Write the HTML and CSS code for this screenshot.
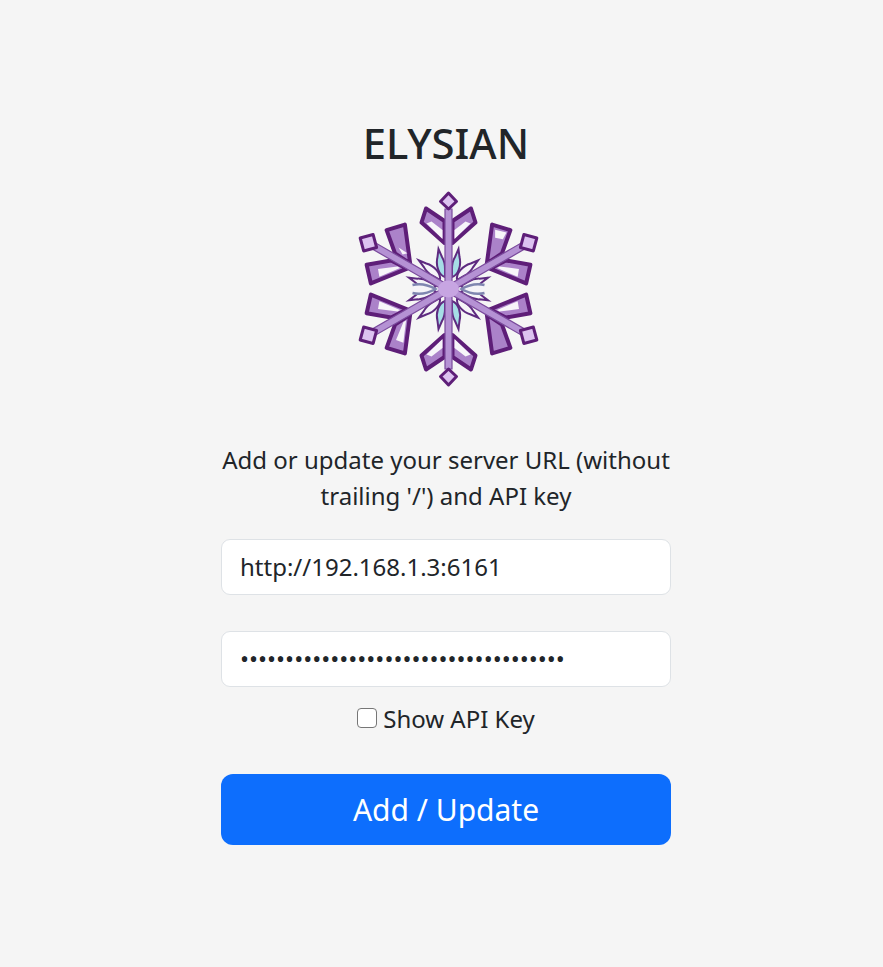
FILE: index.html
```html
<!DOCTYPE html>
<html lang="en">
<head>
<meta charset="utf-8">
<title>Elysian</title>
<link rel="stylesheet" href="styles.css">
</head>
<body>
<main class="page">
  <h1 class="title">ELYSIAN</h1>
  <svg class="logo" width="180" height="200" viewBox="-92.5 -100 180 200">
    <defs>
      <path id="leaf" class="leaf" d="M-22.5 -80.5 L-4 -68 L-4 -46 L-27 -66.5 Z"/>
      <path id="leaf-d" class="leaf" d="M-20 -83 L-4 -64 L-3 -46 L-34 -70 Z"/>
      <path id="win" class="win" d="M-22 -65.5 L-17 -67.5 L-6 -59 L-6 -50 Z"/>
      <path id="win-d" class="win" d="M-18 -71 L-6 -55.5 L-6 -52.5 L-24 -66 Z"/>
      <path id="win-base" class="win" d="M-11 -64 L-7 -57 L-10.5 -53.5 Z"/>
      <path id="win-tip" class="win" d="M-28 -70 L-20 -78.5 L-16 -72 L-21 -66 Z"/>
      <path id="drop" d="M-3.5 -12 C-10 -14 -13 -24 -11 -32 L-10 -40 L-6.5 -32 C-4 -28 -3.5 -24 -3.5 -20 Z"/>
      <path id="flare" class="flare" d="M-36 -4 C-28 -6 -20 -4 -13 0 C-20 4 -28 6 -36 4"/>
      <path id="spine" class="spine" d="M-3.5 0 L-3.5 -80 L3.5 -80 L3.5 0 Z"/>
      <path id="diamond" class="diamond" d="M0 -96 L8 -87.5 L0 -80 L-8 -87.5 Z"/>
      <path id="diamond-d" class="diamond" d="M0 -97 L9.5 -87.5 L0 -78 L-9.5 -87.5 Z"/>
    </defs>

    <use href="#leaf"/><use href="#leaf" transform="scale(-1 1)"/>
    <use href="#leaf-d" transform="rotate(60)"/><use href="#leaf-d" transform="rotate(60) scale(-1 1)"/>
    <use href="#leaf-d" transform="rotate(120)"/><use href="#leaf-d" transform="rotate(120) scale(-1 1)"/>
    <use href="#leaf" transform="rotate(180)"/><use href="#leaf" transform="rotate(180) scale(-1 1)"/>
    <use href="#leaf-d" transform="rotate(240)"/><use href="#leaf-d" transform="rotate(240) scale(-1 1)"/>
    <use href="#leaf-d" transform="rotate(300)"/><use href="#leaf-d" transform="rotate(300) scale(-1 1)"/>

    <use href="#win"/><use href="#win" transform="scale(-1 1)"/>
    <use href="#win-tip" transform="rotate(60)"/><use href="#win-d" transform="rotate(60) scale(-1 1)"/>
    <use href="#win-d" transform="rotate(120)"/>
    <use href="#win" transform="rotate(180)"/><use href="#win" transform="rotate(180) scale(-1 1)"/>
    <use href="#win-d" transform="rotate(240)"/><use href="#win-d" transform="rotate(240) scale(-1 1)"/>
    <use href="#win-d" transform="rotate(300)"/><use href="#win-base" transform="rotate(300) scale(-1 1)"/>

    <g class="drop-cyan">
      <use href="#drop"/><use href="#drop" transform="scale(-1 1)"/>
      <use href="#drop" transform="rotate(180)"/><use href="#drop" transform="rotate(180) scale(-1 1)"/>
    </g>
    <g class="drop-pale">
      <use href="#drop" transform="rotate(60)"/><use href="#drop" transform="rotate(60) scale(-1 1)"/>
      <use href="#drop" transform="rotate(120)"/><use href="#drop" transform="rotate(120) scale(-1 1)"/>
      <use href="#drop" transform="rotate(240)"/><use href="#drop" transform="rotate(240) scale(-1 1)"/>
      <use href="#drop" transform="rotate(300)"/><use href="#drop" transform="rotate(300) scale(-1 1)"/>
    </g>
    <use href="#flare"/>
    <use href="#flare" transform="scale(-1 1)"/>

    <use href="#spine"/>
    <use href="#spine" transform="rotate(180)"/>
    <use href="#spine" transform="rotate(60) translate(0 -5)"/>
    <use href="#spine" transform="rotate(120) translate(0 -5)"/>
    <use href="#spine" transform="rotate(240) translate(0 -5)"/>
    <use href="#spine" transform="rotate(300) translate(0 -5)"/>
    <use href="#diamond"/>
    <use href="#diamond" transform="rotate(180)"/>
    <use href="#diamond-d" transform="rotate(60) translate(0 -5)"/>
    <use href="#diamond-d" transform="rotate(120) translate(0 -5)"/>
    <use href="#diamond-d" transform="rotate(240) translate(0 -5)"/>
    <use href="#diamond-d" transform="rotate(300) translate(0 -5)"/>
    <ellipse class="hub" rx="10.5" ry="8.5"/>
  </svg>
  <p class="lead">Add or update your server URL (without trailing '/') and API key</p>
  <form class="form">
    <input class="field url" type="text" value="http://192.168.1.3:6161">
    <input class="field key" type="password" value="abcdefghijklmnopqrstuvwxyz0123456789">
    <label class="show"><input class="check" type="checkbox">Show API Key</label>
    <button class="submit" type="button">Add / Update</button>
  </form>
</main>
</body>
</html>
```
FILE: styles.css
```css
* { box-sizing: border-box; }
html { margin: 0; }
body {
  margin: 0;
  padding-left: 9px;
  background: #f5f5f5;
  color: #212529;
  font-family: "Noto Sans", sans-serif;
  font-size: 24px;
  line-height: 36px;
}
.page {
  width: 450px;
  margin: 0 auto;
  padding-top: 119px;
  display: flex;
  flex-direction: column;
  align-items: center;
  text-align: center;
}
.title { margin: 0; font-size: 41.8px; line-height: 48px; font-weight: 500; }
.logo { display: block; margin-top: 22px; overflow: visible; }
.lead { margin: 53px 0 0; width: 450px; }
.form { width: 100%; margin-top: 25px; display: flex; flex-direction: column; align-items: center; }
.field {
  display: block; width: 100%; height: 56px; padding: 0 18px 2px;
  border: 1px solid #dee2e6; border-radius: 9px; background: #fff;
  color: #212529; font: inherit;
}
.key { margin-top: 36px; }
.show { margin-top: 14px; height: 36px; display: flex; align-items: center; }
.check {
  appearance: none; width: 20px; height: 20px; margin: 0 6px 2px 0;
  background: #fff; border: 1.5px solid #767676; border-radius: 4px;
}
.submit {
  width: 100%; height: 71px; margin-top: 37px; border: 0; border-radius: 12px;
  background: #0d6efd; color: #fff; font: inherit; font-size: 30px;
}
.leaf { fill: #ab82c9; stroke: #5e1e78; stroke-width: 4; stroke-linejoin: round; }
.win { fill: #f7f5f9; }
.spine { fill: #b592d4; stroke: #7a4a9c; stroke-width: 1.2; }
.diamond { fill: #dcc2f0; stroke: #5e1e78; stroke-width: 3; stroke-linejoin: round; }
.drop-cyan { fill: #a6dde6; stroke: #5e2a80; stroke-width: 2; }
.drop-pale { fill: #f5f4f8; stroke: #5e2a80; stroke-width: 2; }
.flare { fill: #f5f4f8; stroke: #7f86b0; stroke-width: 2.5; }
.hub { fill: #c7a5e2; }
```
